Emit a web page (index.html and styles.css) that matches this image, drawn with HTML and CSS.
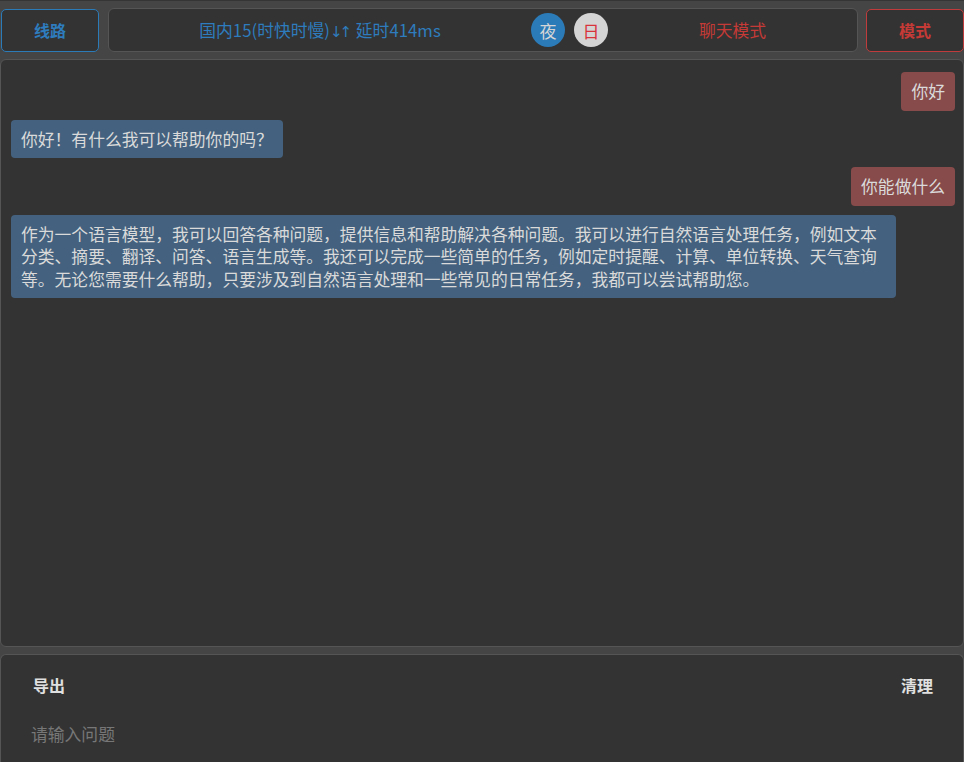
FILE: index.html
```html
<!DOCTYPE html>
<html lang="zh-CN">
<head>
<meta charset="utf-8">
<title>Chat</title>
<link rel="stylesheet" href="styles.css">
</head>
<body>
<div class="app">
  <header class="topbar">
    <button class="btn btn-line">线路</button>
    <div class="status">
      <div class="status-left">国内15(时快时慢)<span class="arrows">↓↑</span> 延时414ms</div>
      <div class="theme">
        <span class="dot dot-night">夜</span>
        <span class="dot dot-day">日</span>
      </div>
      <div class="status-right">聊天模式</div>
    </div>
    <button class="btn btn-mode">模式</button>
  </header>

  <main class="chat">
    <div class="msg msg-user">你好</div>
    <div class="msg msg-bot">你好！有什么我可以帮助你的吗？</div>
    <div class="msg msg-user">你能做什么</div>
    <div class="msg msg-bot">作为一个语言模型，我可以回答各种问题，提供信息和帮助解决各种问题。我可以进行自然语言处理任务，例如文本分类、摘要、翻译、问答、语言生成等。我还可以完成一些简单的任务，例如定时提醒、计算、单位转换、天气查询等。无论您需要什么帮助，只要涉及到自然语言处理和一些常见的日常任务，我都可以尝试帮助您。</div>
  </main>

  <footer class="composer">
    <div class="actions">
      <button class="link-btn">导出</button>
      <button class="link-btn">清理</button>
    </div>
    <textarea class="input" placeholder="请输入问题"></textarea>
  </footer>
</div>
</body>
</html>
```

FILE: styles.css
```css
* { box-sizing: border-box; }

html, body {
  margin: 0;
  padding: 0;
  height: 100%;
  overflow: hidden;
}

body {
  background: #454545;
  font-family: "Noto Sans CJK SC", "Noto Sans", sans-serif;
  color: #d8d8d8;
  border-top: 1px solid #353535;
}

.app {
  display: flex;
  flex-direction: column;
  height: 100%;
}

.topbar {
  display: flex;
  align-items: center;
  height: 58px;
  padding: 0 0 0 1px;
  flex: none;
}

.btn {
  width: 98px;
  height: 43px;
  background: #333;
  border-radius: 5px;
  font-family: inherit;
  font-size: 16px;
  font-weight: bold;
  flex: none;
  padding: 0;
}

.btn-line {
  border: 1px solid #2b7bb9;
  color: #2e7cbd;
}

.btn-mode {
  border: 1px solid #c03c3c;
  color: #c53a36;
  margin-left: 8px;
}

.status {
  flex: 1;
  margin-left: 9px;
  height: 44px;
  background: #333;
  border: 1px solid #555;
  border-radius: 6px;
  display: flex;
  align-items: center;
  font-size: 16.8px;
}

.status-left {
  width: 422px;
  text-align: center;
  color: #2e7cbd;
}

.arrows {
  letter-spacing: -3px;
  margin-right: 3px;
  font-family: "DejaVu Sans", sans-serif;
  font-size: 15px;
}

.theme {
  display: flex;
  gap: 9px;
}

.dot {
  width: 34px;
  height: 34px;
  border-radius: 50%;
  display: flex;
  align-items: center;
  justify-content: center;
  font-size: 17px;
}

.dot-night {
  background: #2b7bb9;
  color: #d6d6d6;
}

.dot-day {
  background: #d4d4d4;
  color: #d8333b;
}

.status-right {
  flex: 1;
  text-align: center;
  color: #c53a36;
}

.chat {
  flex: 1;
  background: #333;
  border: 1px solid #555;
  border-radius: 6px;
  padding: 12px 8px 12px 10px;
  display: flex;
  flex-direction: column;
  align-items: flex-start;
  gap: 9px;
  min-height: 0;
}

.msg {
  font-size: 16.8px;
  line-height: 22.5px;
  padding: 8px 10px;
  border-radius: 4px;
  max-width: 885px;
  color: #dadada;
}

.msg-user {
  align-self: flex-end;
  background: #874b4b;
}

.msg-bot {
  background: #44627f;
}

.composer {
  flex: none;
  height: 108px;
  margin-top: 7px;
  background: #333;
  border: 1px solid #555;
  border-bottom: none;
  border-radius: 6px 6px 0 0;
  padding: 14px 30px 0 30px;
}

.actions {
  display: flex;
  justify-content: space-between;
  padding: 0 0 0 2px;
}

.link-btn {
  background: none;
  border: none;
  padding: 4px 0;
  font-family: inherit;
  font-size: 16px;
  font-weight: bold;
  color: #e0e0e0;
}

.input {
  display: block;
  width: 100%;
  margin-top: 21px;
  background: transparent;
  border: none;
  outline: none;
  resize: none;
  padding: 0;
  height: 30px;
  font-family: inherit;
  font-size: 16.8px;
  color: #ddd;
}

.input::placeholder {
  color: #777;
}
```
